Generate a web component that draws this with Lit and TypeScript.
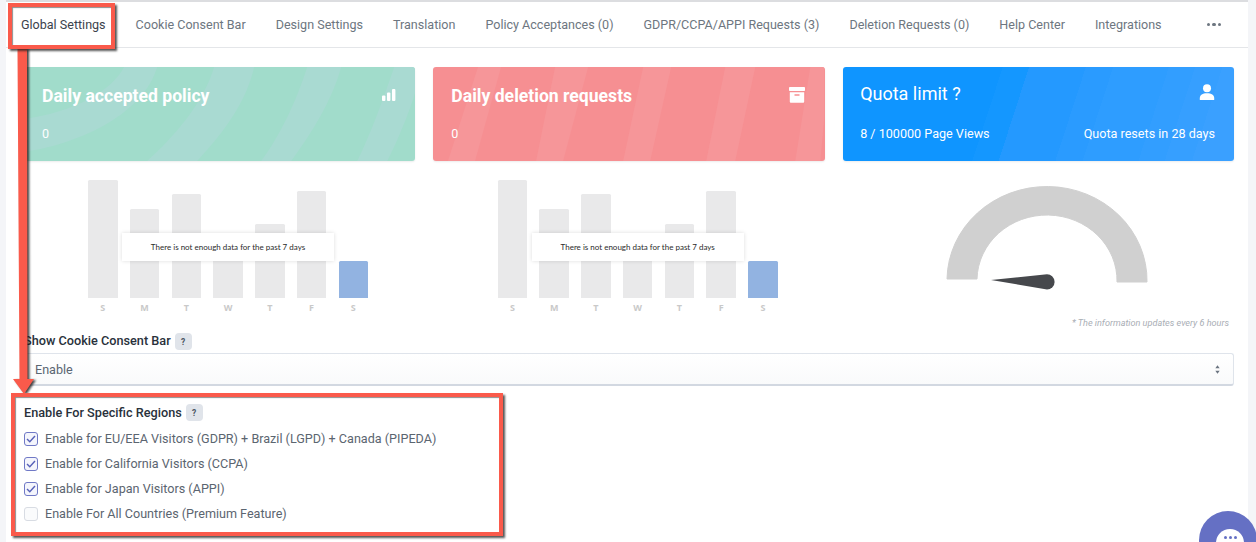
import { LitElement, html, css, svg } from "lit";
import { customElement } from "lit/decorators.js";

const TABS = ["Global Settings","Cookie Consent Bar","Design Settings","Translation","Policy Acceptances (0)","GDPR/CCPA/APPI Requests (3)","Deletion Requests (0)","Help Center","Integrations"];
const BARS = [118, 89, 104.5, 63, 74, 107, 37];
const DAYS = ["S","M","T","W","T","F","S"];
const REGIONS: [string, boolean][] = [
  ["Enable for EU/EEA Visitors (GDPR) + Brazil (LGPD) + Canada (PIPEDA)", true],
  ["Enable for California Visitors (CCPA)", true],
  ["Enable for Japan Visitors (APPI)", true],
  ["Enable For All Countries (Premium Feature)", false],
];
const GREEN_BANDS = [
  "M100 0 C88 24 50 45 0 52 L0 85 C60 76 120 45 133 0Z",
  "M190 0 C180 35 150 70 123 94 L173 94 C200 65 222 35 230 0Z",
  "M283 0 C272 35 255 70 237 94 L267 94 C288 65 307 35 317 0Z",
  "M370 0 C358 35 345 70 333 94 L363 94 C375 70 385 45 391 25 L391 0Z",
];
const RED_BANDS = [
  "M45 0 L15 94 L42 94 L68 0Z",
  "M122 0 L103 94 L130 94 L155 0Z",
  "M210 0 L190 94 L217 94 L238 0Z",
  "M292 0 L273 94 L302 94 L322 0Z",
  "M377 0 L362 94 L387 94 L391 50 L391 0Z",
];

@customElement("app-root")
export class AppRoot extends LitElement {
  static styles = css`
    :host { display:block; position:relative; width:1256px; height:542px; overflow:hidden; background:#f4f5f8; font-family:Roboto,"Liberation Sans",sans-serif; }
    .panel { margin:0 8px 0 6px; height:542px; background:#fff; border-top:2px solid #dcdde0; box-sizing:border-box; }
    .tabs { display:flex; height:46px; border-bottom:1px solid #e4e6e9; box-sizing:border-box; align-items:center; }
    .tab { padding:0 15px; font-size:12.55px; color:#6d7680; white-space:nowrap; }
    .tab.active { color:#3a424c; }
    .dots { margin-left:30px; display:flex; gap:2px; }
    .dots i { width:3.6px; height:3.6px; border-radius:50%; background:#6d7680; }
    .content { padding:19px 14px 0 18px; }
    .grid { display:grid; grid-template-columns:repeat(3,1fr); column-gap:18px; }
    .card { position:relative; overflow:hidden; height:94px; border-radius:3px; box-sizing:border-box; padding:0 18px; color:#fff; display:flex; flex-direction:column; box-shadow:0 1px 2px rgba(0,0,0,.08); }
    .card > .art { position:absolute; left:0; top:0; width:100%; height:100%; }
    .head, .foot { position:relative; }
    .green { background:#a1dccb; }
    .green .art path { fill:#a9dad2; }
    .red { padding-right:19px; background:#f68f92; }
    .red .art path { fill:#f69699; }
    .blue { padding:0 19px 0 17.5px; background:linear-gradient(108deg,#0f95ff 0 152px,#1497ff 152px 177px,#2499ff 177px 231px,#2a9bff 231px 257px,#2e9dff 257px 310px,#329eff 310px 335px,#369fff 335px 361px,#3aa0ff 361px); }
    .head { display:flex; justify-content:space-between; align-items:center; height:58px; }
    .title { font-size:17.6px; font-weight:700; padding-top:0; }
    .title.light { font-weight:400; font-size:18px; margin-top:-6px; }
    .foot { display:flex; justify-content:space-between; font-size:12.6px; margin-top:1px; color:#fdfeff; }
    .ico { display:block; }
    .head .ico { margin-top:-3px; }
    .red .head .ico { margin-right:1px; }
    .blue .head .ico { margin-top:-8px; }
    .row-h { height:155px; }
    .chart { position:relative; margin:19px 0 0 64px; width:280px; }
    .grid > div:nth-child(2) .chart { margin-left:64.7px; }
    .bars { height:118px; display:flex; align-items:flex-end; justify-content:space-between; }
    .bar { width:29.5px; background:#e9e9ea; border-radius:1.5px 1.5px 0 0; }
    .bar.last { background:#92b3e1; }
    .labels { display:flex; justify-content:space-between; margin-top:4px; }
    .labels span { width:29.5px; text-align:center; font:700 9px "Open Sans",sans-serif; color:#c9c9c9; line-height:12px; }
    .tip { position:absolute; left:34px; top:53px; width:212px; height:28px; background:#fff; box-shadow:0 0 4px rgba(0,0,0,.14); display:flex; align-items:center; justify-content:center; font:8px Lato,sans-serif; color:#2b2b2b; }
    .gauge { display:block; margin-left:0; }
    .note { text-align:right; font-size:9.1px; font-style:italic; color:#a9aeb5; padding-right:5px; height:14px; line-height:14px; }
    .label { display:flex; align-items:center; gap:4px; font-size:12.7px; font-weight:500; color:#29313b; height:17px; }
    .label > span:first-child { margin-top:-1px; }
    .label.first > span:first-child { margin-top:-2px; }
    .badge { width:17px; height:17px; border-radius:4px; background:#e0e4ea; color:#4b5563; font-size:8.5px; font-weight:700; display:flex; align-items:center; justify-content:center; }
    .first { margin-top:3px; }
    .select { margin-top:3px; height:33px; box-sizing:border-box; border:1px solid #dfe4eb; border-bottom:2px solid #d2d8e1; border-radius:3px; background:linear-gradient(#fff,#f9fafb); display:flex; align-items:center; justify-content:space-between; padding:0 13px 0 10px; font-size:12.6px; color:#5a6672; }
    .regions { margin-top:18px; }
    .checks { margin-top:5px; display:flex; flex-direction:column; }
    .check { display:flex; align-items:center; gap:7px; height:25px; font-size:12.6px; color:#5b6570; }
    .box { width:14px; height:14px; box-sizing:border-box; border:1px solid #d8dce3; border-radius:3px; background:#fafbfc; display:flex; align-items:center; justify-content:center; }
    .box.on { border-color:#7079c6; background:#f4f5fc; }
    .hl { position:absolute; box-sizing:border-box; border:4px solid #fa5a4b; box-shadow:2px 2px 2px rgba(30,30,30,.75), inset 1px 1px 1px rgba(30,30,30,.5); pointer-events:none; }
    .hl.a { left:8px; top:3px; width:107px; height:46px; }
    .hl.b { left:11px; top:393px; width:492px; height:143px; }
    .arrow { position:absolute; left:0; top:0; pointer-events:none; }
    .chat { position:absolute; left:1199px; top:511px; width:58px; height:58px; border-radius:50%; background:#6570c4; }
    .chat b { position:absolute; left:17px; top:18px; width:28px; height:28px; border-radius:50%; background:#fff; display:flex; justify-content:center; gap:2px; padding-top:7px; box-sizing:border-box; }
    .chat i { width:3px; height:3px; border-radius:50%; background:#6570c4; }
  `;

  art(paths: string[]) {
    return html`<svg class="art" viewBox="0 0 391 94" preserveAspectRatio="none">${paths.map(d => svg`<path d=${d}></path>`)}</svg>`;
  }

  chart() {
    return html`<div class="chart">
      <div class="bars">${BARS.map((h, i) => html`<div class="bar ${i === 6 ? "last" : ""}" style="height:${h}px"></div>`)}</div>
      <div class="labels">${DAYS.map(d => html`<span>${d}</span>`)}</div>
      <div class="tip">There is not enough data for the past 7 days</div>
    </div>`;
  }

  render() {
    const help = html`<span class="badge">?</span>`;
    return html`
    <div class="panel">
      <div class="tabs">
        ${TABS.map((t, i) => html`<div class="tab ${i === 0 ? "active" : ""}">${t}</div>`)}
        <div class="dots"><i></i><i></i><i></i></div>
      </div>
      <div class="content">
        <div class="grid">
          <div class="card green">
            ${this.art(GREEN_BANDS)}
            <div class="head"><span class="title">Daily accepted policy</span>
              <svg class="ico" width="16" height="14" viewBox="0 0 16 14" fill="#fff"><rect x="1" y="7.5" width="3.4" height="5.5" rx="1"/><rect x="6" y="4.5" width="3.4" height="8.5" rx="1"/><rect x="11" y="1" width="3.4" height="12" rx="1"/></svg>
            </div>
            <div class="foot"><span>0</span></div>
          </div>
          <div class="card red">
            ${this.art(RED_BANDS)}
            <div class="head"><span class="title">Daily deletion requests</span>
              <svg class="ico" width="16" height="16" viewBox="0 0 16 16" fill="#fff"><rect x="0" y="0" width="16" height="4" rx=".8"/><path d="M.8 5.2h14.4v9.6a1 1 0 0 1-1 1H1.8a1 1 0 0 1-1-1zM5.5 7.3v1.4h5V7.3z" fill-rule="evenodd"/></svg>
            </div>
            <div class="foot"><span>0</span></div>
          </div>
          <div class="card blue">
            <div class="head"><span class="title light">Quota limit ?</span>
              <svg class="ico" width="16" height="16" viewBox="0 0 16 16" fill="#fff"><circle cx="8" cy="4.2" r="4"/><path d="M.8 16v-1.8C.8 11 3.5 9.2 8 9.2s7.2 1.8 7.2 5V16z"/></svg>
            </div>
            <div class="foot"><span>8 / 100000 Page Views</span><span>Quota resets in 28 days</span></div>
          </div>
        </div>
        <div class="grid row-h">
          <div>${this.chart()}</div>
          <div>${this.chart()}</div>
          <svg class="gauge" width="392" height="155" viewBox="842 161 392 155">
            <path d="M947 279 A100 94 0 0 1 1147 282 L1117 282 A70 65.5 0 0 0 977 279 Z" fill="#d0d0d0" stroke="#d0d0d0" stroke-width="1" stroke-linejoin="round"/>
            <path d="M991 280 L1047 274.3 A7.6 7.6 0 0 1 1047 289.5 Z" fill="#46484c"/>
          </svg>
        </div>
        <div class="note">* The information updates every 6 hours</div>
        <div class="label first"><span>Show Cookie Consent Bar</span> ${help}</div>
        <div class="select"><span>Enable</span>
          <svg width="5" height="9" viewBox="0 0 6 10" fill="#6b7480"><path d="M3 0l2.6 3.4H.4zM3 10L.4 6.6h5.2z"/></svg>
        </div>
        <div class="label regions"><span>Enable For Specific Regions</span> ${help}</div>
        <div class="checks">
          ${REGIONS.map(([t, on]) => html`<div class="check"><span class="box ${on ? "on" : ""}">${on ? svg`<svg width="10" height="8" viewBox="0 0 10 8" fill="none" stroke="#5660b8" stroke-width="1.4"><path d="M1 4l2.8 2.8L9 1"/></svg>` : ""}</span>${t}</div>`)}
        </div>
      </div>
    </div>
    <div class="chat"><b><i></i><i></i><i></i></b></div>
    <svg class="arrow" width="60" height="400" viewBox="0 0 60 400" style="filter:drop-shadow(2px 1px 1px rgba(20,20,20,.8))">
      <path d="M17.5 48 L27 48 L27.5 379 L34 379 L24 394 L13 379 L19.5 379 Z" fill="#fa5a4b"/>
    </svg>
    <div class="hl a"></div>
    <div class="hl b"></div>`;
  }
}
